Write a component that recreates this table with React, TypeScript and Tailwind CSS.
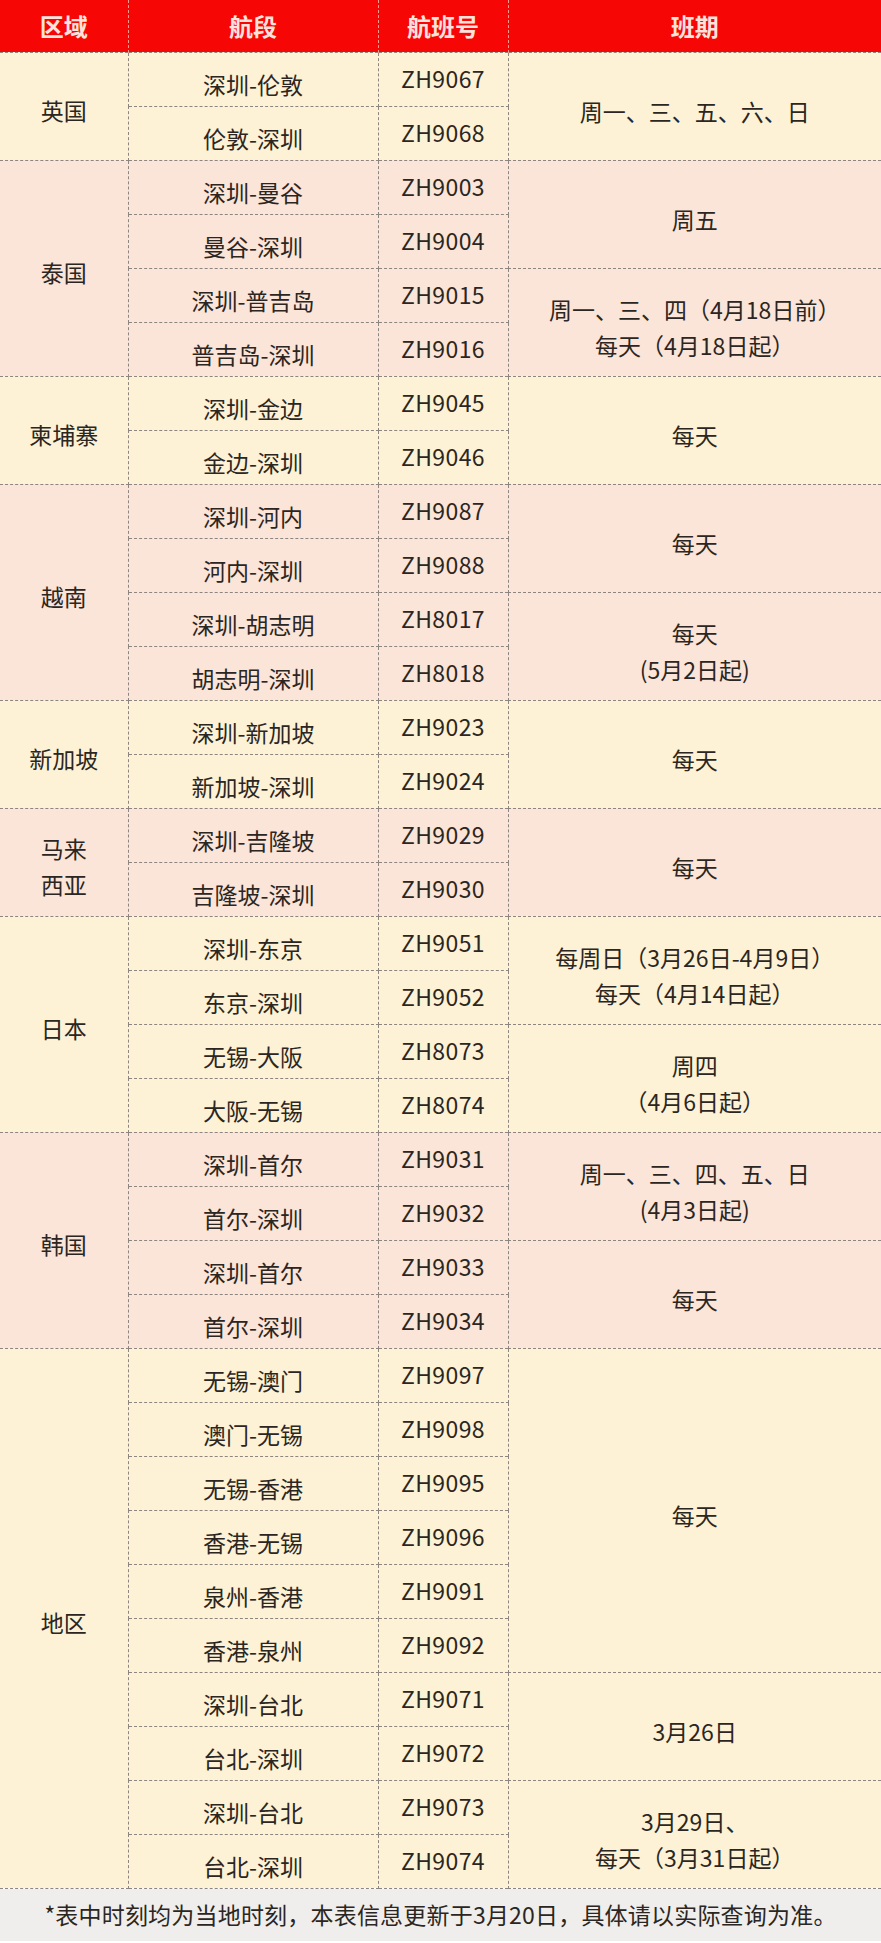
import React from "react";

type Sched = { span: number; lines: string[] };
type Group = {
  region: string[];
  pink: boolean;
  flights: [string, string][];
  sched: Sched[];
};

const groups: Group[] = [
  {
    region: ["英国"],
    pink: false,
    flights: [
      ["深圳-伦敦", "ZH9067"],
      ["伦敦-深圳", "ZH9068"],
    ],
    sched: [{ span: 2, lines: ["周一、三、五、六、日"] }],
  },
  {
    region: ["泰国"],
    pink: true,
    flights: [
      ["深圳-曼谷", "ZH9003"],
      ["曼谷-深圳", "ZH9004"],
      ["深圳-普吉岛", "ZH9015"],
      ["普吉岛-深圳", "ZH9016"],
    ],
    sched: [
      { span: 2, lines: ["周五"] },
      { span: 2, lines: ["周一、三、四（4月18日前）", "每天（4月18日起）"] },
    ],
  },
  {
    region: ["柬埔寨"],
    pink: false,
    flights: [
      ["深圳-金边", "ZH9045"],
      ["金边-深圳", "ZH9046"],
    ],
    sched: [{ span: 2, lines: ["每天"] }],
  },
  {
    region: ["越南"],
    pink: true,
    flights: [
      ["深圳-河内", "ZH9087"],
      ["河内-深圳", "ZH9088"],
      ["深圳-胡志明", "ZH8017"],
      ["胡志明-深圳", "ZH8018"],
    ],
    sched: [
      { span: 2, lines: ["每天"] },
      { span: 2, lines: ["每天", "(5月2日起)"] },
    ],
  },
  {
    region: ["新加坡"],
    pink: false,
    flights: [
      ["深圳-新加坡", "ZH9023"],
      ["新加坡-深圳", "ZH9024"],
    ],
    sched: [{ span: 2, lines: ["每天"] }],
  },
  {
    region: ["马来", "西亚"],
    pink: true,
    flights: [
      ["深圳-吉隆坡", "ZH9029"],
      ["吉隆坡-深圳", "ZH9030"],
    ],
    sched: [{ span: 2, lines: ["每天"] }],
  },
  {
    region: ["日本"],
    pink: false,
    flights: [
      ["深圳-东京", "ZH9051"],
      ["东京-深圳", "ZH9052"],
      ["无锡-大阪", "ZH8073"],
      ["大阪-无锡", "ZH8074"],
    ],
    sched: [
      { span: 2, lines: ["每周日（3月26日-4月9日）", "每天（4月14日起）"] },
      { span: 2, lines: ["周四", "（4月6日起）"] },
    ],
  },
  {
    region: ["韩国"],
    pink: true,
    flights: [
      ["深圳-首尔", "ZH9031"],
      ["首尔-深圳", "ZH9032"],
      ["深圳-首尔", "ZH9033"],
      ["首尔-深圳", "ZH9034"],
    ],
    sched: [
      { span: 2, lines: ["周一、三、四、五、日", "(4月3日起)"] },
      { span: 2, lines: ["每天"] },
    ],
  },
  {
    region: ["地区"],
    pink: false,
    flights: [
      ["无锡-澳门", "ZH9097"],
      ["澳门-无锡", "ZH9098"],
      ["无锡-香港", "ZH9095"],
      ["香港-无锡", "ZH9096"],
      ["泉州-香港", "ZH9091"],
      ["香港-泉州", "ZH9092"],
      ["深圳-台北", "ZH9071"],
      ["台北-深圳", "ZH9072"],
      ["深圳-台北", "ZH9073"],
      ["台北-深圳", "ZH9074"],
    ],
    sched: [
      { span: 6, lines: ["每天"] },
      { span: 2, lines: ["3月26日"] },
      { span: 2, lines: ["3月29日、", "每天（3月31日起）"] },
    ],
  },
];

const cell = "border border-dashed border-[#8d8680] text-center align-middle p-0";

function GroupRows({ group }: { group: Group }) {
  const bg = group.pink ? "bg-[#fbe4d8]" : "bg-[#fdf2d5]";
  const starts = new Map<number, Sched>();
  let at = 0;
  for (const s of group.sched) {
    starts.set(at, s);
    at += s.span;
  }

  return (
    <>
      {group.flights.map(([route, no], i) => {
        const s = starts.get(i);
        return (
          <tr key={no} className={`h-[54px] ${bg}`}>
            {i === 0 && (
              <td rowSpan={group.flights.length} className={`${cell} border-l-0 pt-2 leading-[36px]`}>
                {group.region.map((r) => (
                  <div key={r}>{r}</div>
                ))}
              </td>
            )}
            <td className={`${cell} pt-[10px]`}>{route}</td>
            <td className={`${cell} pb-[2px] tracking-[0.4px]`}>{no}</td>
            {s && (
              <td rowSpan={s.span} className={`${cell} border-r-0 pt-[10px] leading-[36px]`}>
                {s.lines.map((l) => (
                  <div key={l}>{l}</div>
                ))}
              </td>
            )}
          </tr>
        );
      })}
    </>
  );
}

export default function App() {
  return (
    <div className="w-[881px] bg-white font-['Noto_Sans_CJK_SC','Noto_Sans',sans-serif] text-[#2b2622]">
      <table className="w-full table-fixed border-collapse text-[23px]">
        <colgroup>
          <col className="w-[128px]" />
          <col className="w-[250px]" />
          <col className="w-[130px]" />
          <col />
        </colgroup>
        <thead>
          <tr className="h-[52px] bg-[#f70606] text-[24px] font-bold text-[#fde3dc]">
            <th className="border-r border-dashed border-[#f49a8e] font-bold">区域</th>
            <th className="border-r border-dashed border-[#f49a8e] font-bold">航段</th>
            <th className="border-r border-dashed border-[#f49a8e] font-bold">航班号</th>
            <th className="font-bold">班期</th>
          </tr>
        </thead>
        <tbody>
          {groups.map((g) => (
            <GroupRows key={g.region.join("")} group={g} />
          ))}
        </tbody>
      </table>
      <div className="flex h-[52px] items-center justify-center bg-[#efeeec] text-[23px] tracking-[0.2px]">
        *表中时刻均为当地时刻，本表信息更新于3月20日，具体请以实际查询为准。
      </div>
      <div className="h-[3px] bg-white" />
    </div>
  );
}
